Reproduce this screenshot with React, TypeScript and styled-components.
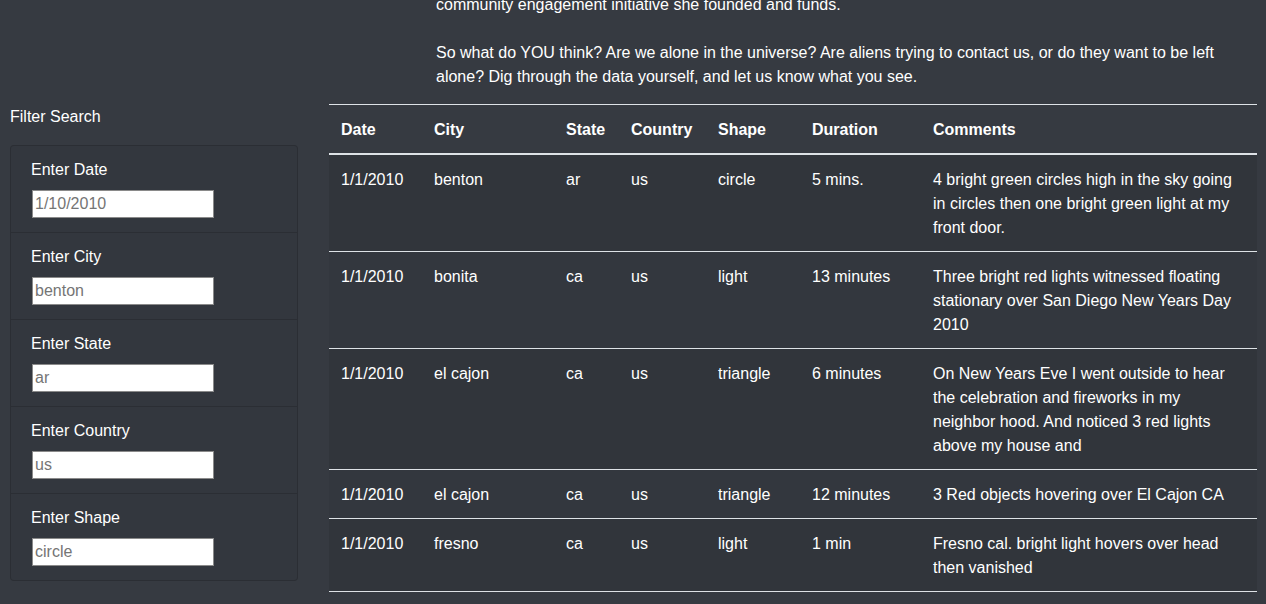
import React from 'react';
import styled, { createGlobalStyle } from 'styled-components';

const GlobalStyle = createGlobalStyle`
  html, body {
    margin: 0;
    padding: 0;
    background: #363a41;
    color: #ffffff;
    font-family: "Liberation Sans", Helvetica, Arial, sans-serif;
    font-size: 16px;
    line-height: 24px;
    overflow: hidden;
  }
`;

const Page = styled.div`
  width: 1266px;
  height: 604px;
  overflow: hidden;
`;

const Intro = styled.p`
  margin: -7px 0 15px 436px;
  width: 805px;
  color: #ffffff;
`;

const Main = styled.div`
  display: flex;
  align-items: flex-start;
  gap: 31px;
  padding-left: 10px;
`;

const Sidebar = styled.aside`
  width: 288px;
  flex-shrink: 0;
  display: flex;
  flex-direction: column;
  gap: 17px;
`;

const SidebarTitle = styled.div`
  font-size: 16px;
  line-height: 24px;
  padding-top: 1px;
  margin-bottom: -1px;
`;

const FilterList = styled.ul`
  list-style: none;
  margin: 0;
  padding: 0;
  background: #33373e;
  border: 1px solid rgba(0, 0, 0, 0.15);
  border-radius: 4px;
`;

const FilterItem = styled.li`
  padding: 12px 20px 14px 20px;
  display: flex;
  flex-direction: column;
  gap: 8px;

  & + & {
    border-top: 1px solid rgba(0, 0, 0, 0.15);
  }
`;

const FilterLabel = styled.label`
  font-size: 16px;
  line-height: 24px;
  color: #ffffff;
`;

const FilterInput = styled.input`
  box-sizing: border-box;
  width: 182px;
  height: 28px;
  margin-left: 1px;
  padding: 1px 2px;
  border: 1px solid #8a8a8a;
  background: #ffffff;
  font-family: inherit;
  font-size: 16px;
  color: #333;

  &::placeholder {
    color: #757575;
  }
`;

const Table = styled.table`
  width: 928px;
  border-collapse: collapse;
  table-layout: fixed;
  color: #ffffff;
  border-top: 1px solid #dee2e6;
`;

const HeadCell = styled.th`
  text-align: left;
  font-weight: 700;
  padding: 13px 12px 11px;
  border-bottom: 2px solid #dee2e6;
  vertical-align: bottom;
`;

const Row = styled.tr<{ $striped: boolean }>`
  background: ${(p) => (p.$striped ? '#31353b' : '#33373e')};
  border-bottom: 1px solid #dee2e6;
`;

const Cell = styled.td`
  padding: 13px 12px 11px;
  vertical-align: top;
`;

const filters = [
  { label: 'Enter Date', placeholder: '1/10/2010' },
  { label: 'Enter City', placeholder: 'benton' },
  { label: 'Enter State', placeholder: 'ar' },
  { label: 'Enter Country', placeholder: 'us' },
  { label: 'Enter Shape', placeholder: 'circle' },
];

const columns = [
  { title: 'Date', width: 93 },
  { title: 'City', width: 132 },
  { title: 'State', width: 65 },
  { title: 'Country', width: 87 },
  { title: 'Shape', width: 94 },
  { title: 'Duration', width: 121 },
  { title: 'Comments', width: 336 },
];

const sightings = [
  ['1/1/2010', 'benton', 'ar', 'us', 'circle', '5 mins.', '4 bright green circles high in the sky going in circles then one bright green light at my front door.'],
  ['1/1/2010', 'bonita', 'ca', 'us', 'light', '13 minutes', 'Three bright red lights witnessed floating stationary over San Diego New Years Day 2010'],
  ['1/1/2010', 'el cajon', 'ca', 'us', 'triangle', '6 minutes', 'On New Years Eve I went outside to hear the celebration and fireworks in my neighbor hood. And noticed 3 red lights above my house and'],
  ['1/1/2010', 'el cajon', 'ca', 'us', 'triangle', '12 minutes', '3 Red objects hovering over El Cajon CA'],
  ['1/1/2010', 'fresno', 'ca', 'us', 'light', '1 min', 'Fresno cal. bright light hovers over head then vanished'],
];

export default function App() {
  return (
    <Page>
      <GlobalStyle />
      <Intro>
        community engagement initiative she founded and funds.
        <br />
        <br />
        So what do YOU think? Are we alone in the universe? Are aliens trying to contact us, or do they want to be left
        alone? Dig through the data yourself, and let us know what you see.
      </Intro>
      <Main>
        <Sidebar>
          <SidebarTitle>Filter Search</SidebarTitle>
          <FilterList>
            {filters.map((f) => (
              <FilterItem key={f.label}>
                <FilterLabel>{f.label}</FilterLabel>
                <FilterInput type="text" placeholder={f.placeholder} />
              </FilterItem>
            ))}
          </FilterList>
        </Sidebar>
        <Table>
          <colgroup>
            {columns.map((c) => (
              <col key={c.title} style={{ width: c.width }} />
            ))}
          </colgroup>
          <thead>
            <tr>
              {columns.map((c) => (
                <HeadCell key={c.title}>{c.title}</HeadCell>
              ))}
            </tr>
          </thead>
          <tbody>
            {sightings.map((row, i) => (
              <Row key={i} $striped={i % 2 === 0}>
                {row.map((value, j) => (
                  <Cell key={j}>{value}</Cell>
                ))}
              </Row>
            ))}
          </tbody>
        </Table>
      </Main>
    </Page>
  );
}
